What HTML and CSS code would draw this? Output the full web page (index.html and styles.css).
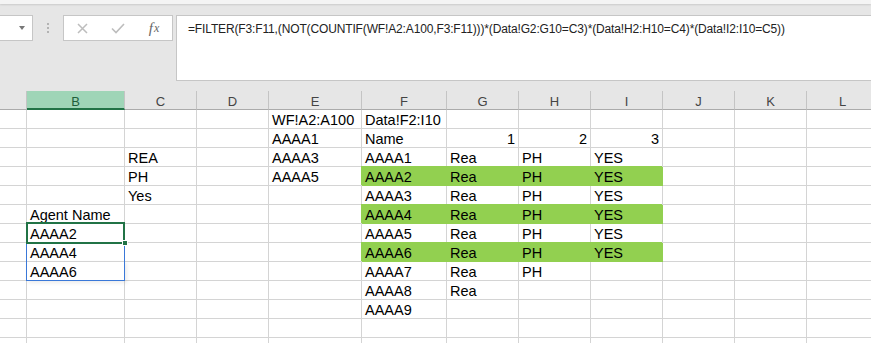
FILE: index.html
```html
<!DOCTYPE html>
<html lang="en">
<head>
  <meta charset="UTF-8">
  <title>Sheet</title>
  <link rel="stylesheet" href="styles.css">
</head>
<body>
  <div class="topbar">
    <div class="title-strip"></div>
    <div class="formula-bar">
      <div class="namebox"><span class="arrow"></span></div>
      <div class="dots"><span></span><span></span><span></span></div>
      <div class="fbtns">
        <span class="fbtn">
          <svg width="11" height="11" viewBox="0 0 11 11"><path d="M1 1L10 10M10 1L1 10" stroke="#bdbdbd" stroke-width="1.5" fill="none"/></svg>
        </span>
        <span class="fbtn">
          <svg width="14" height="11" viewBox="0 0 14 11"><path d="M1 5.5L5 9.5L13 1" stroke="#bdbdbd" stroke-width="1.6" fill="none"/></svg>
        </span>
        <span class="fbtn fx"><i>f</i><i class="x">x</i></span>
      </div>
      <div class="formula">=FILTER(F3:F11,(NOT(COUNTIF(WF!A2:A100,F3:F11)))*(Data!G2:G10=C3)*(Data!H2:H10=C4)*(Data!I2:I10=C5))</div>
    </div>
  </div>

  <div class="sheet" id="sheet">
    <div class="row colhead">
      <div class="cell"></div>
      <div class="cell current">B</div>
      <div class="cell">C</div>
      <div class="cell">D</div>
      <div class="cell">E</div>
      <div class="cell">F</div>
      <div class="cell">G</div>
      <div class="cell">H</div>
      <div class="cell">I</div>
      <div class="cell">J</div>
      <div class="cell">K</div>
      <div class="cell">L</div>
    </div>
  </div>

  <script>
    // columns A..L, one array per row
    const rows = [
      ['', '', '', '', 'WF!A2:A100', 'Data!F2:I10'],
      ['', '', '', '', 'AAAA1', 'Name', 1, 2, 3],
      ['', '', 'REA', '', 'AAAA3', 'AAAA1', 'Rea', 'PH', 'YES'],
      ['', '', 'PH', '', 'AAAA5', 'AAAA2', 'Rea', 'PH', 'YES'],
      ['', '', 'Yes', '', '', 'AAAA3', 'Rea', 'PH', 'YES'],
      ['', 'Agent Name', '', '', '', 'AAAA4', 'Rea', 'PH', 'YES'],
      ['', 'AAAA2', '', '', '', 'AAAA5', 'Rea', 'PH', 'YES'],
      ['', 'AAAA4', '', '', '', 'AAAA6', 'Rea', 'PH', 'YES'],
      ['', 'AAAA6', '', '', '', 'AAAA7', 'Rea', 'PH'],
      ['', '', '', '', '', 'AAAA8', 'Rea'],
      ['', '', '', '', '', 'AAAA9'],
      [],
      []
    ];
    const greenRows = [3, 5, 7];

    const sheet = document.getElementById('sheet');
    rows.forEach((row, r) => {
      const line = document.createElement('div');
      line.className = 'row';
      for (let c = 0; c < 12; c++) {
        const cell = document.createElement('div');
        const value = row[c] === undefined ? '' : row[c];
        cell.className = 'cell';
        if (typeof value === 'number') cell.classList.add('num');
        if (greenRows.includes(r) && c >= 5 && c <= 8) cell.classList.add('fill');
        if (c === 1 && r === 6) cell.classList.add('active');
        if (c === 1 && r === 7) cell.classList.add('spill');
        if (c === 1 && r === 8) cell.classList.add('spill', 'spill-end');
        cell.textContent = value;
        line.appendChild(cell);
      }
      sheet.appendChild(line);
    });
  </script>
</body>
</html>
```

FILE: styles.css
```css
body {
  margin: 0;
  width: 871px;
  height: 343px;
  overflow: hidden;
  background: #fff;
  font-family: "Liberation Sans", Arial, sans-serif;
  color: #000;
}

/* formula bar area */
.topbar {
  height: 91px;
  background: #e6e6e6;
}
.title-strip {
  height: 4px;
  background: #f4f4f4;
  box-shadow: 0 1px 2px rgba(0,0,0,0.12);
}
.formula-bar {
  display: flex;
  align-items: flex-start;
  margin-top: 11px;
}
.namebox {
  width: 33px;
  height: 26px;
  box-sizing: border-box;
  background: #fff;
  border: 1px solid #c6c6c6;
  border-left: none;
  display: flex;
  align-items: center;
  justify-content: flex-end;
  padding-right: 7px;
}
.arrow {
  width: 0;
  height: 0;
  border-top: 4px solid #777;
  border-left: 3.5px solid transparent;
  border-right: 3.5px solid transparent;
}
.dots {
  width: 30px;
  display: flex;
  flex-direction: column;
  align-items: center;
  gap: 2px;
  padding-top: 8px;
}
.dots span {
  width: 2px;
  height: 2px;
  background: #b3b3b3;
}
.fbtns {
  width: 110px;
  height: 26px;
  box-sizing: border-box;
  background: #fff;
  border: 1px solid #c6c6c6;
  display: flex;
}
.fbtn {
  width: 36px;
  display: flex;
  align-items: center;
  justify-content: center;
}
.fx {
  font-family: "Liberation Serif", serif;
  color: #666;
  font-size: 15px;
  padding-top: 1px;
}
.fx .x {
  font-size: 12px;
  margin-left: 1px;
}
.formula {
  flex: 1;
  height: 66px;
  box-sizing: border-box;
  margin-left: 3px;
  background: #fff;
  border: 1px solid #c6c6c6;
  border-right: none;
  padding: 5px 0 0 11px;
  font-size: 12px;
  line-height: 16px;
  letter-spacing: -0.14px;
  color: #222;
  white-space: nowrap;
}

/* grid */
.row {
  display: grid;
  grid-template-columns: 27px 98px 72px 72px 93px 85px 72px 72px 72px 72px 72px 72px;
  height: 19px;
}
.cell {
  box-sizing: border-box;
  height: 19px;
  border-right: 1px solid #d4d4d4;
  border-bottom: 1px solid #d4d4d4;
  padding: 3px 3px 0;
  font-size: 14.5px;
  line-height: 15px;
  white-space: nowrap;
}
.num {
  text-align: right;
}
.fill {
  background: #92d050;
  border-color: #92d050;
  box-shadow: -1px -1px 0 #92d050;
}

.colhead .cell {
  background: #e6e6e6;
  border-right-color: #c4c4c4;
  border-bottom-color: #ababab;
  text-align: center;
  color: #444;
  font-size: 13px;
  line-height: 16px;
  padding: 3px 0 0;
}
.colhead .current {
  background: #9fd5b7;
  color: #1f5f3c;
  border-bottom: 2px solid #217346;
}

/* selection */
.active,
.spill {
  position: relative;
}
.active::after {
  content: '';
  position: absolute;
  left: -1px;
  right: -1px;
  top: -2px;
  bottom: -2px;
  border: 2px solid #217346;
  z-index: 2;
}
.active::before {
  content: '';
  position: absolute;
  width: 4px;
  height: 4px;
  right: -4px;
  bottom: -4px;
  background: #217346;
  border: 1px solid #fff;
  z-index: 3;
}
.spill::after {
  content: '';
  position: absolute;
  left: -1px;
  right: -1px;
  top: 0;
  bottom: -1px;
  border-left: 1px solid #3a78d8;
  border-right: 1px solid #3a78d8;
  z-index: 1;
}
.spill-end::after {
  top: -1px;
  border-bottom: 1px solid #3a78d8;
  box-shadow: 2px 2px 4px rgba(0,0,0,0.08);
}
```
